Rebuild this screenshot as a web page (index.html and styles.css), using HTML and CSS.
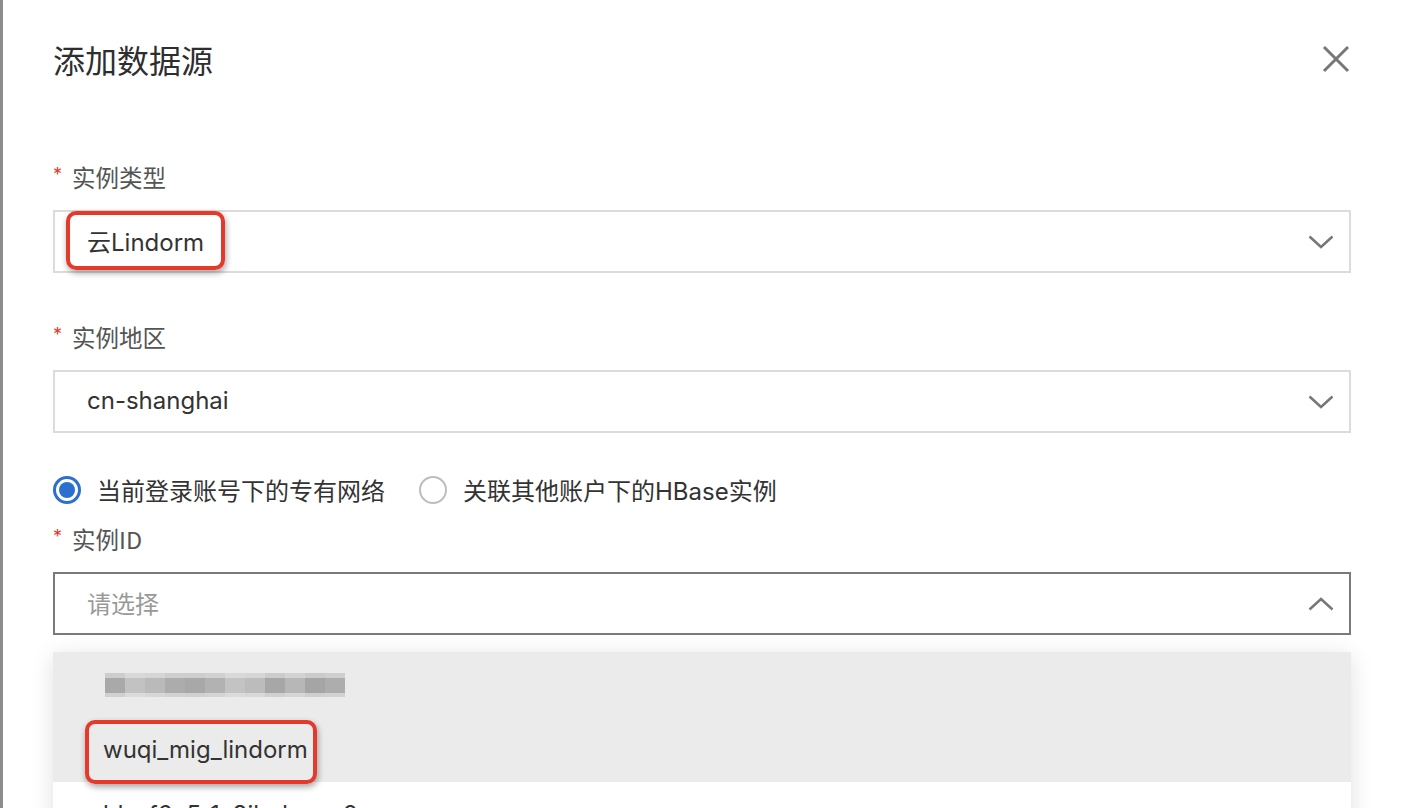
FILE: index.html
```html
<!DOCTYPE html>
<html lang="zh-CN">
<head>
<meta charset="utf-8">
<title>添加数据源</title>
<link rel="stylesheet" href="styles.css">
</head>
<body>
<div class="modal">
  <header class="modal-header">
    <h1 class="title">添加数据源</h1>
    <button class="close" type="button" aria-label="关闭">
      <svg width="28" height="28" viewBox="0 0 28 28"><path d="M2 2 L26 26 M26 2 L2 26" stroke="#777" stroke-width="3" fill="none"/></svg>
    </button>
  </header>

  <div class="field field-first">
    <div class="label"><span class="req">*</span>实例类型</div>
    <div class="select">
      <span class="value">云Lindorm</span>
      <svg class="chev" width="26" height="14" viewBox="0 0 26 14"><polyline points="1.5,1.5 13,12 24.5,1.5" fill="none" stroke="#777" stroke-width="2.5"/></svg>
      <span class="mark mark-type"></span>
    </div>
  </div>

  <div class="field">
    <div class="label"><span class="req">*</span>实例地区</div>
    <div class="select">
      <span class="value">cn-shanghai</span>
      <svg class="chev" width="26" height="14" viewBox="0 0 26 14"><polyline points="1.5,1.5 13,12 24.5,1.5" fill="none" stroke="#777" stroke-width="2.5"/></svg>
    </div>
  </div>

  <div class="radios">
    <label class="radio-item"><span class="radio checked"></span><span class="radio-text">当前登录账号下的专有网络</span></label>
    <label class="radio-item"><span class="radio"></span><span class="radio-text">关联其他账户下的HBase实例</span></label>
  </div>

  <div class="field field-id">
    <div class="label"><span class="req">*</span>实例ID</div>
    <div class="select open">
      <span class="value placeholder">请选择</span>
      <svg class="chev" width="26" height="14" viewBox="0 0 26 14"><polyline points="1.5,12.5 13,2 24.5,12.5" fill="none" stroke="#777" stroke-width="2.5"/></svg>
    </div>
  </div>

  <div class="dropdown">
    <div class="option active">
      <span class="mosaic"><i></i><i></i><i></i><i></i><i></i><i></i><i></i><i></i><i></i><i></i><i></i><i></i></span>
    </div>
    <div class="option active">
      <span class="opt-text">wuqi_mig_lindorm</span>
      <span class="mark mark-opt"></span>
    </div>
    <div class="option">
      <span class="opt-text">ld-uf6e5r1s8ilndorm-2</span>
    </div>
  </div>
</div>
</body>
</html>
```

FILE: styles.css
```css
* { box-sizing: border-box; }

html, body {
  margin: 0;
  height: 100%;
}

body {
  background: #fff;
  font-family: Inter, "Noto Sans CJK SC", sans-serif;
  overflow: hidden;
}

.modal {
  border-left: 3px solid #8c8c8c;
  padding: 0 51px 0 50px;
  min-height: 808px;
}

.modal-header {
  height: 118px;
  display: flex;
  align-items: center;
  justify-content: space-between;
}

.title {
  margin: 0;
  font-family: "Noto Sans CJK SC", sans-serif;
  font-size: 32px;
  font-weight: 400;
  color: #2e2e2e;
}

.close {
  width: 28px;
  height: 28px;
  padding: 0;
  border: 0;
  background: none;
  display: flex;
  margin-right: 1px;
}

.field { margin-top: 48px; }
.field-first { margin-top: 43px; }
.field-id { margin-top: 13px; }

.label {
  height: 34px;
  display: flex;
  align-items: center;
  padding-bottom: 2px;
  font-family: "Noto Sans CJK SC", sans-serif;
  font-size: 23.5px;
  color: #555;
}

.req {
  color: #e23b2e;
  font-family: Inter, sans-serif;
  font-size: 18px;
  margin-right: 10px;
  align-self: flex-start;
  margin-top: 3px;
}

.select {
  position: relative;
  margin-top: 15px;
  height: 63px;
  border: 2px solid #dcdcdc;
  display: flex;
  align-items: center;
  padding: 0 15px 3px 32px;
  font-size: 24px;
  color: #333;
}

.select .chev { margin-top: 3px; }

.select.open { border-color: #7a7a7a; }

.placeholder { color: #999; }

.chev { margin-left: auto; }

.mark {
  position: absolute;
  border: 4px solid #e4392b;
  border-radius: 10px;
  box-shadow: 1px 3px 6px rgba(0, 0, 0, 0.35);
  z-index: 2;
}

.mark-type {
  left: 11px;
  top: -1px;
  width: 159px;
  height: 59px;
}

.radios {
  margin-top: 37px;
  height: 40px;
  display: flex;
  align-items: center;
  gap: 34px;
}

.radio-item {
  display: flex;
  align-items: center;
  gap: 16px;
}

.radio {
  width: 28px;
  height: 28px;
  border-radius: 50%;
  border: 2px solid #bdbdbd;
  position: relative;
}

.radio.checked {
  border: 3px solid #2b6fcf;
}

.radio.checked::after {
  content: "";
  position: absolute;
  left: 3px;
  top: 3px;
  width: 16px;
  height: 16px;
  border-radius: 50%;
  background: #2b6fcf;
}

.radio-text {
  font-size: 24px;
  color: #333;
  padding-bottom: 2px;
}

.dropdown {
  margin-top: 17px;
  background: #fff;
  box-shadow: 0 4px 22px rgba(0, 0, 0, 0.12);
}

.option {
  position: relative;
  height: 65px;
  display: flex;
  align-items: center;
  padding-left: 50px;
  font-size: 24px;
  color: #333;
}

.option.active { background: #ebebeb; }

.opt-text { white-space: nowrap; }

.mark-opt {
  left: 32px;
  top: 3px;
  width: 232px;
  height: 64px;
}

.mosaic {
  position: relative;
  display: flex;
  margin-left: 2px;
  height: 24px;
}

.mosaic i {
  width: 20px;
  height: 24px;
  background: #b3b3b3;
}

.mosaic::before {
  content: "";
  position: absolute;
  left: 0;
  right: 0;
  top: 0;
  height: 5px;
  background: rgba(235, 235, 235, 0.55);
}

.mosaic::after {
  content: "";
  position: absolute;
  left: 0;
  right: 0;
  bottom: 0;
  height: 4px;
  background: rgba(235, 235, 235, 0.6);
}

.mosaic i:nth-child(1) { background: #a9a9a9; }
.mosaic i:nth-child(2) { background: #c2c2c2; }
.mosaic i:nth-child(3) { background: #bababa; }
.mosaic i:nth-child(4) { background: #acacac; }
.mosaic i:nth-child(5) { background: #a8a8a8; }
.mosaic i:nth-child(6) { background: #b2b2b2; }
.mosaic i:nth-child(7) { background: #c3c3c3; }
.mosaic i:nth-child(8) { background: #bcbcbc; }
.mosaic i:nth-child(9) { background: #a7a7a7; }
.mosaic i:nth-child(10) { background: #b7b7b7; }
.mosaic i:nth-child(11) { background: #a5a5a5; }
.mosaic i:nth-child(12) { background: #adadad; }
```
